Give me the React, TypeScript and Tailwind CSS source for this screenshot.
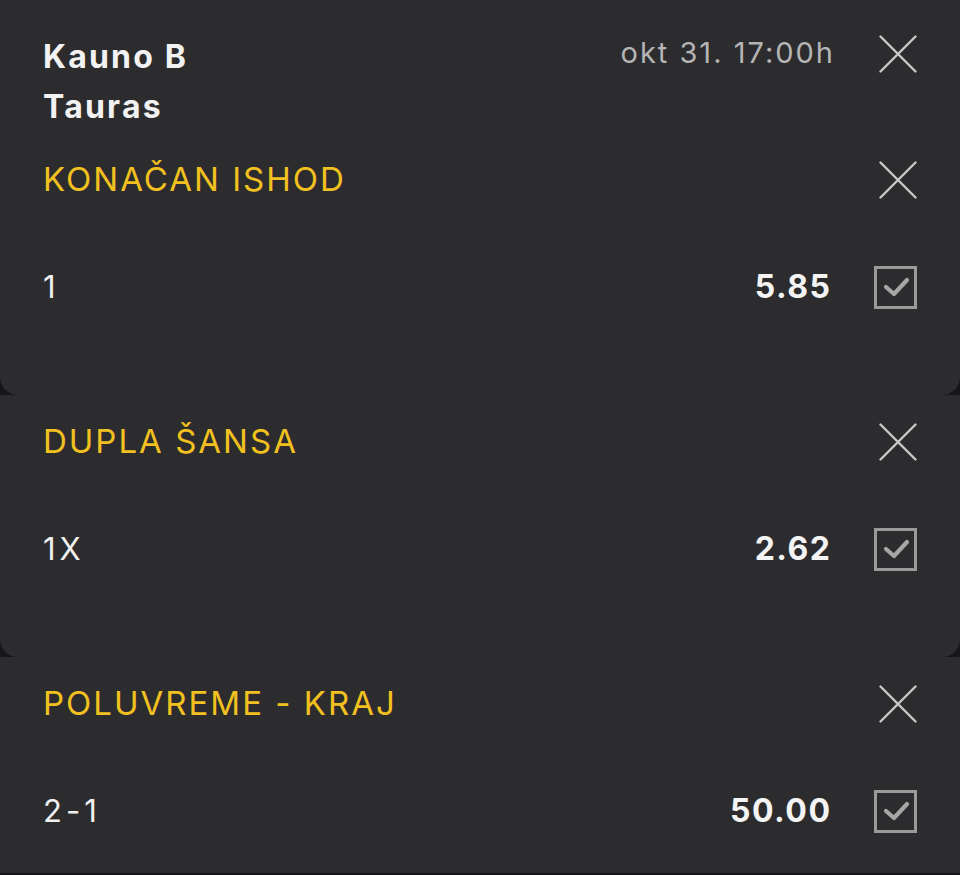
import React from 'react';

interface Pick {
  market: string;
  label: string;
  odd: string;
}

const picks: Pick[] = [
  { market: 'KONAČAN ISHOD', label: '1', odd: '5.85' },
  { market: 'DUPLA ŠANSA', label: '1X', odd: '2.62' },
  { market: 'POLUVREME - KRAJ', label: '2-1', odd: '50.00' },
];

const CloseIcon = () => (
  <svg width="38" height="38" viewBox="0 0 38 38" className="text-[#c9c9c9]">
    <path d="M1.5 1.5 L36.5 36.5 M36.5 1.5 L1.5 36.5" stroke="currentColor" strokeWidth="2.4" strokeLinecap="round" fill="none" />
  </svg>
);

const CheckBox = () => (
  <div className="w-[43px] h-[43px] border-[3px] border-[#9a9a9a] flex items-center justify-center">
    <svg width="30" height="24" viewBox="0 0 30 24">
      <path d="M5 12 L13 19 L26 5" stroke="#a6a6a6" strokeWidth="4.2" fill="none" strokeLinecap="round" strokeLinejoin="round" />
    </svg>
  </div>
);

const PickCard: React.FC<{ pick: Pick; first?: boolean; last?: boolean }> = ({ pick, first, last }) => (
  <div className={`bg-[#2c2c2e] px-[43px] ${last ? 'pb-10' : 'rounded-b-[18px] pb-[86px]'} ${first ? 'pt-0' : 'pt-[27px]'}`}>
    {first && (
      <div className="pt-[32px] pb-[28px] flex justify-between">
        <div className="flex flex-col text-[32px] font-bold text-[#f2f2f2] leading-[50px] tracking-[2.2px]">
          <span>Kauno B</span>
          <span>Tauras</span>
        </div>
        <div className="flex items-start gap-[44px]">
          <span className="text-[29px] text-[#b5b5b5] leading-[50px] -mt-[4px] tracking-[2px]">okt 31. 17:00h</span>
          <div style={{ marginTop: 3 }}>
            <CloseIcon />
          </div>
        </div>
      </div>
    )}
    <div className="h-10 flex items-center justify-between">
      <span className="text-[33px] text-[#f2c11f] tracking-[2px]">{pick.market}</span>
      <CloseIcon />
    </div>
    <div className="mt-[65px] h-11 flex items-center justify-between">
      <span className="text-[31px] text-[#f0f0f0] tracking-[4px]">{pick.label}</span>
      <div className="flex items-center gap-[44px]">
        <span className="text-[32px] font-bold text-[#f4f4f4] tracking-[1.5px] -mr-[1.5px]">{pick.odd}</span>
        <CheckBox />
      </div>
    </div>
  </div>
);

export default function App() {
  return (
    <div className="w-[960px] h-[875px] overflow-hidden bg-[#161618]" style={{ fontFamily: 'Inter, "Noto Sans", sans-serif' }}>
      {picks.map((p, i) => (
        <PickCard key={p.market} pick={p} first={i === 0} last={i === picks.length - 1} />
      ))}
    </div>
  );
}
